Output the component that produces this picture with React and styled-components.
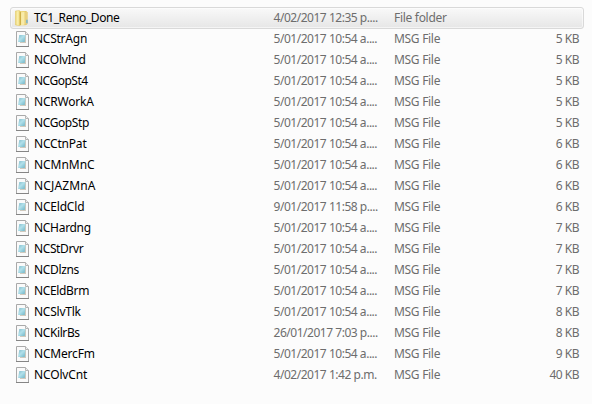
import React from "react";
import styled, { createGlobalStyle } from "styled-components";

const GlobalStyle = createGlobalStyle`
  * { box-sizing: border-box; }
  body { margin: 0; background: #fcfcfc; overflow: hidden; }
`;

const FileList = styled.main`
  width: 592px;
  height: 404px;
  padding: 7px 8px 0 10px;
  background: #fcfcfc;
  font: 12px/20px "Noto Sans", "Open Sans", sans-serif;
  color: #6d6d6d;
`;

const Row = styled.div`
  display: grid;
  grid-template-columns: 19px 239.5px 120.5px 120px 1fr;
  align-items: center;
  height: 22px;
  margin-bottom: -1px;
  padding: 0 4px;
  border: 1px solid ${(p) => (p.$selected ? "#d9d9d9" : "transparent")};
  border-radius: 3px;
  background: ${(p) => (p.$selected ? "linear-gradient(#f9f9f9, #e6e6e6)" : "none")};
  box-shadow: ${(p) => (p.$selected ? "inset 0 0 0 1px rgba(255,255,255,.55)" : "none")};
`;

const Cell = styled.span`
  white-space: nowrap;
  letter-spacing: ${(p) => p.$tracking || 0}px;
`;

const Name = styled(Cell)`
  color: #000;
`;

const Size = styled(Cell)`
  text-align: right;
`;

const Icon = styled.svg`
  display: block;
  width: 16px;
  height: 16px;
`;

const FolderIcon = () => (
  <Icon viewBox="0 0 16 16">
    <defs>
      <linearGradient id="folderBack" x1="0" x2="1">
        <stop offset="0" stopColor="#f3e08e" />
        <stop offset="1" stopColor="#e3c55e" />
      </linearGradient>
      <linearGradient id="folderFront" x1="0" x2="1">
        <stop offset="0" stopColor="#ecd572" />
        <stop offset=".5" stopColor="#fbf1b0" />
        <stop offset="1" stopColor="#e8cd68" />
      </linearGradient>
    </defs>
    <path d="M5 1h6.2l1 1v12.5l-2 .8H5z" fill="url(#folderBack)" />
    <path d="M10 2h2.7v11.8l-2.7.8z" fill="#e9d080" />
    <path d="M.4 1l3.8-.5 1 .8v14l-1 .4-3.8-.8z" fill="url(#folderFront)" stroke="#dfc561" strokeWidth=".5" />
    <path d="M4.8 1.5l1 .7v12.6l-1 .8z" fill="#c9a83d" />
    <path d="M6.2 2.6l3.3-.8v12.6l-3.3 1z" fill="#f8ebaa" />
    <path d="M11.3 9.8h1.3v3.4h-1.3z" fill="#5eaee0" />
  </Icon>
);

const MessageIcon = () => (
  <Icon viewBox="0 0 16 16">
    <defs>
      <linearGradient id="note" x1="0" y1="0" x2="1" y2="1">
        <stop offset="0" stopColor="#7fb9c9" />
        <stop offset=".45" stopColor="#b2e0ea" />
        <stop offset="1" stopColor="#6db4c6" />
      </linearGradient>
    </defs>
    <path d="M1.5.5h9l3 3v12h-12z" fill="#fafafa" stroke="#a9a9a9" />
    <path d="M1 15.5h13" stroke="#858585" />
    <path d="M10.5.5v3h3" fill="#eee" stroke="#b5b5b5" />
    <path d="M5 4h6v8H5z" fill="#cfc9bd" />
    <path d="M4.3 4h6.2l-.8 7H3z" fill="url(#note)" />
  </Icon>
);

const D = "5/01/2017 10:54 a....";
const files = [
  { name: "TC1_Reno_Done", date: "4/02/2017 12:35 p....", type: "File folder", folder: true, tracking: -0.4 },
  { name: "NCStrAgn", date: D, size: 5, tracking: -0.25 },
  { name: "NCOlvInd", date: D, size: 5, tracking: -0.3 },
  { name: "NCGopSt4", date: D, size: 5, tracking: -0.5 },
  { name: "NCRWorkA", date: D, size: 5, tracking: -0.2 },
  { name: "NCGopStp", date: D, size: 5, tracking: -0.4 },
  { name: "NCCtnPat", date: D, size: 6, tracking: -0.2 },
  { name: "NCMnMnC", date: D, size: 6, tracking: -0.05 },
  { name: "NCJAZMnA", date: D, size: 6, tracking: 0.15 },
  { name: "NCEldCld", date: "9/01/2017 11:58 p....", size: 6, tracking: -0.2 },
  { name: "NCHardng", date: D, size: 7, tracking: -0.3 },
  { name: "NCStDrvr", date: D, size: 7, tracking: -0.4 },
  { name: "NCDlzns", date: D, size: 7, tracking: -0.35 },
  { name: "NCEldBrm", date: D, size: 7, tracking: -0.35 },
  { name: "NCSlvTlk", date: D, size: 8, tracking: -0.25 },
  { name: "NCKilrBs", date: "26/01/2017 7:03 p....", size: 8, tracking: -0.4 },
  { name: "NCMercFm", date: D, size: 9, tracking: -0.2 },
  { name: "NCOlvCnt", date: "4/02/2017 1:42 p.m.", size: 40, tracking: -0.15 },
];

export default function App() {
  return (
    <>
      <GlobalStyle />
      <FileList>
        {files.map((f) => (
          <Row key={f.name} $selected={f.folder}>
            {f.folder ? <FolderIcon /> : <MessageIcon />}
            <Name $tracking={f.tracking}>{f.name}</Name>
            <Cell $tracking={-0.47}>{f.date}</Cell>
            <Cell $tracking={-0.3}>{f.type || "MSG File"}</Cell>
            <Size $tracking={-0.5}>{f.size ? `${f.size} KB` : ""}</Size>
          </Row>
        ))}
      </FileList>
    </>
  );
}
